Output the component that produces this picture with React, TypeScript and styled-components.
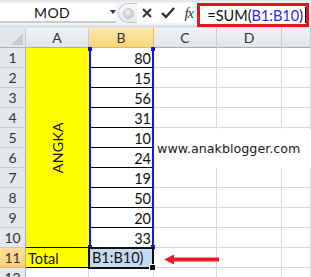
import React from 'react';
import styled, { createGlobalStyle, css } from 'styled-components';

const Global = createGlobalStyle`
  html, body { margin: 0; padding: 0; background: #fff; }
  body { font-family: Lato, "Liberation Sans", sans-serif; }
`;

const Frame = styled.div`
  width: 311px;
  height: 277px;
  overflow: hidden;
  position: relative;
  background: #fff;
`;

const FormulaBar = styled.div`
  height: 28px;
  box-sizing: border-box;
  display: flex;
  align-items: flex-start;
  padding-top: 3px;
  background: #f2f4f7;
  border-top: 2px solid #e3e6ea;
  border-bottom: 3px solid #dde1e6;
`;

const NameBox = styled.div`
  width: 120px;
  height: 20px;
  margin-top: -2px;
  box-sizing: border-box;
  background: #fff;
  display: flex;
  align-items: center;
  border-bottom: 2px solid #c8ccd2;
`;

const NameText = styled.span`
  width: 104px;
  text-align: center;
  font-size: 14px;
  color: #111;
  letter-spacing: 0.3px;
`;

const DropArrow = styled.span`
  width: 0;
  height: 0;
  border-left: 3px solid transparent;
  border-right: 3px solid transparent;
  border-top: 4px solid #333;
  margin-left: 6px;
`;

const Splitter = styled.div`
  width: 22px;
  height: 20px;
  margin-top: -2px;
  margin-left: 2px;
  box-sizing: border-box;
  border: 1px solid #c3c7cd;
  border-right: none;
  border-radius: 11px 0 0 11px;
  background: linear-gradient(#fbfbfc, #e6e8eb);
  display: flex;
  align-items: center;
  justify-content: center;
`;

const Knob = styled.div`
  width: 9px;
  height: 9px;
  border-radius: 50%;
  background: radial-gradient(circle at 40% 35%, #f4f4f4, #b9bcc0);
  border: 1px solid #c3c6ca;
`;

const Tools = styled.div`
  height: 20px;
  margin-top: -2px;
  display: flex;
  align-items: center;
  gap: 9px;
  padding-left: 5px;
  padding-right: 4px;
  background: #fff;
`;

const Fx = styled.span`
  font-family: "Liberation Serif", serif;
  font-style: italic;
  font-size: 15px;
  color: #333;
  letter-spacing: -1px;
`;

const FormulaBox = styled.div`
  flex: 1;
  height: 24px;
  margin-top: -2px;
  margin-right: 2px;
  box-sizing: border-box;
  border: 3px solid #e8141b;
  background: #fff;
  display: flex;
  align-items: center;
  padding-left: 7px;
  font-size: 14.5px;
  color: #111;
`;

const RefText = styled.span`
  color: #2a2af0;
`;

const Caret = styled.span`
  display: inline-block;
  width: 1px;
  height: 16px;
  background: #000;
  margin-left: 2px;
`;

const Sheet = styled.div`
  display: grid;
  grid-template-columns: 26px 63px 65px 63px 65px 1fr;
  grid-template-rows: repeat(13, 20px);
  position: relative;
`;

const headerBase = css`
  box-sizing: border-box;
  display: flex;
  align-items: center;
  justify-content: center;
  font-size: 14px;
  color: #333;
`;

const ColHead = styled.div<{ $sel?: boolean }>`
  ${headerBase}
  background: linear-gradient(#f1f3f6, #e1e5ea);
  border-right: 1px solid #c7cbd1;
  border-bottom: 1px solid #a9b0b9;
  ${(p) =>
    p.$sel &&
    css`
      background: linear-gradient(#fbe9ad, #f9d77c);
      border-right: 1px solid #f0b450;
      border-bottom: 1px solid #f0b450;
    `}
`;

const Corner = styled.div`
  ${headerBase}
  position: relative;
  background: #e4e7eb;
  border-right: 1px solid #c7cbd1;
  border-bottom: 1px solid #a9b0b9;
`;

const CornerTri = styled.div`
  position: absolute;
  right: 2px;
  bottom: 2px;
  width: 0;
  height: 0;
  border-left: 12px solid transparent;
  border-bottom: 12px solid #c6cace;
`;

const RowHead = styled.div<{ $sel?: boolean }>`
  ${headerBase}
  background: #e4e7eb;
  border-right: 1px solid #a9b0b9;
  border-bottom: 1px solid #c7cbd1;
  ${(p) =>
    p.$sel &&
    css`
      background: linear-gradient(#fbdf94, #f9d27a);
      border-bottom: 1px solid #f0b450;
    `}
`;

const Cell = styled.div`
  box-sizing: border-box;
  border-right: 1px solid #d8d8d8;
  border-bottom: 1px solid #d8d8d8;
  background: #fff;
`;

const MergedA = styled.div`
  grid-column: 2;
  grid-row: 2 / span 10;
  background: #ffff00;
  display: flex;
  align-items: center;
  justify-content: center;
`;

const Vertical = styled.span`
  writing-mode: vertical-rl;
  transform: rotate(180deg);
  font-size: 14px;
  color: #111;
  letter-spacing: 0.4px;
`;

const ValueCell = styled.div`
  grid-column: 3;
  box-sizing: border-box;
  border-bottom: 1px solid #000;
  text-align: right;
  padding-right: 3px;
  padding-top: 2px;
  line-height: 18px;
  font-size: 14.5px;
  color: #111;
`;

const TotalCell = styled.div`
  grid-column: 2;
  grid-row: 12;
  box-sizing: border-box;
  background: #ffff00;
  border-top: 1px solid #000;
  border-bottom: 1px solid #000;
  margin-top: -1px;
  height: 21px;
  padding-left: 2px;
  padding-top: 2px;
  line-height: 18px;
  font-size: 14.5px;
  color: #111;
`;

const ActiveCell = styled.div`
  grid-column: 3;
  grid-row: 12;
  position: relative;
  box-sizing: border-box;
  margin: -1px 0 -1px -1px;
  border: 2px solid #111;
  background: #c6d9f0;
  padding-left: 2px;
  line-height: 18px;
  font-size: 14.5px;
  color: #111;
`;

const FillHandle = styled.div`
  position: absolute;
  right: -4px;
  bottom: -4px;
  width: 5px;
  height: 5px;
  background: #111;
  border: 1px solid #fff;
`;

const Range = styled.div`
  grid-column: 3;
  grid-row: 2 / span 10;
  position: relative;
  box-sizing: border-box;
  border-left: 2px solid #1414f0;
  border-right: 2px solid #1414f0;
  pointer-events: none;
`;

const Handle = styled.div<{ $top?: boolean; $left?: boolean }>`
  position: absolute;
  width: 4px;
  height: 4px;
  background: #1414f0;
  ${(p) => (p.$top ? 'top: -1px;' : 'bottom: -1px;')}
  ${(p) => (p.$left ? 'left: -3px;' : 'right: -3px;')}
`;

const Watermark = styled.div`
  position: absolute;
  left: 155px;
  top: 129px;
  width: 156px;
  height: 39px;
  background: #fff;
  display: flex;
  align-items: center;
  padding-left: 2px;
  box-sizing: border-box;
  font-family: "DejaVu Sans", Verdana, sans-serif;
  font-size: 12.7px;
  color: #1a1a1a;
`;

const Arrow = styled.svg`
  position: absolute;
  left: 164px;
  top: 254px;
`;

const values = [80, 15, 56, 31, 10, 24, 19, 50, 20, 33];

export default function App() {
  return (
    <Frame>
      <Global />
      <FormulaBar>
        <NameBox>
          <NameText>MOD</NameText>
          <DropArrow />
        </NameBox>
        <Splitter>
          <Knob />
        </Splitter>
        <Tools>
          <svg width="10" height="10" viewBox="0 0 10 10">
            <path d="M1 1 L9 9 M9 1 L1 9" stroke="#333" strokeWidth="2" />
          </svg>
          <svg width="14" height="12" viewBox="0 0 14 12">
            <path d="M1 6 L5 10 L13 1" stroke="#333" strokeWidth="2.4" fill="none" />
          </svg>
          <Fx>fx</Fx>
        </Tools>
        <FormulaBox>
          =SUM(<RefText>B1:B10</RefText>)<Caret />
        </FormulaBox>
      </FormulaBar>
      <Sheet>
        <Corner>
          <CornerTri />
        </Corner>
        <ColHead>A</ColHead>
        <ColHead $sel>B</ColHead>
        <ColHead>C</ColHead>
        <ColHead>D</ColHead>
        <ColHead />

        {values.map((v, i) => (
          <React.Fragment key={i}>
            <RowHead style={{ gridRow: i + 2, gridColumn: 1 }}>{i + 1}</RowHead>
            <ValueCell style={{ gridRow: i + 2 }}>{v}</ValueCell>
            <Cell style={{ gridRow: i + 2, gridColumn: 4 }} />
            <Cell style={{ gridRow: i + 2, gridColumn: 5 }} />
            <Cell style={{ gridRow: i + 2, gridColumn: 6 }} />
          </React.Fragment>
        ))}
        <MergedA>
          <Vertical>ANGKA</Vertical>
        </MergedA>
        <Range>
          <Handle $top $left />
          <Handle $top />
          <Handle $left />
          <Handle />
        </Range>

        <RowHead $sel style={{ gridRow: 12, gridColumn: 1 }}>11</RowHead>
        <TotalCell>Total</TotalCell>
        <ActiveCell>
          B1:B10)
          <FillHandle />
        </ActiveCell>
        <Cell style={{ gridRow: 12, gridColumn: 4 }} />
        <Cell style={{ gridRow: 12, gridColumn: 5 }} />
        <Cell style={{ gridRow: 12, gridColumn: 6 }} />

        <RowHead style={{ gridRow: 13, gridColumn: 1 }}>12</RowHead>
        <Cell style={{ gridRow: 13, gridColumn: 2 }} />
        <Cell style={{ gridRow: 13, gridColumn: 3 }} />
        <Cell style={{ gridRow: 13, gridColumn: 4 }} />
        <Cell style={{ gridRow: 13, gridColumn: 5 }} />
        <Cell style={{ gridRow: 13, gridColumn: 6 }} />
      </Sheet>
      <Watermark>www.anakblogger.com</Watermark>
      <Arrow width="56" height="11" viewBox="0 0 56 11">
        <polygon points="0,5.5 10,0.5 10,3.5 55,3.5 55,7.5 10,7.5 10,10.5" fill="#ec1c24" />
      </Arrow>
    </Frame>
  );
}
